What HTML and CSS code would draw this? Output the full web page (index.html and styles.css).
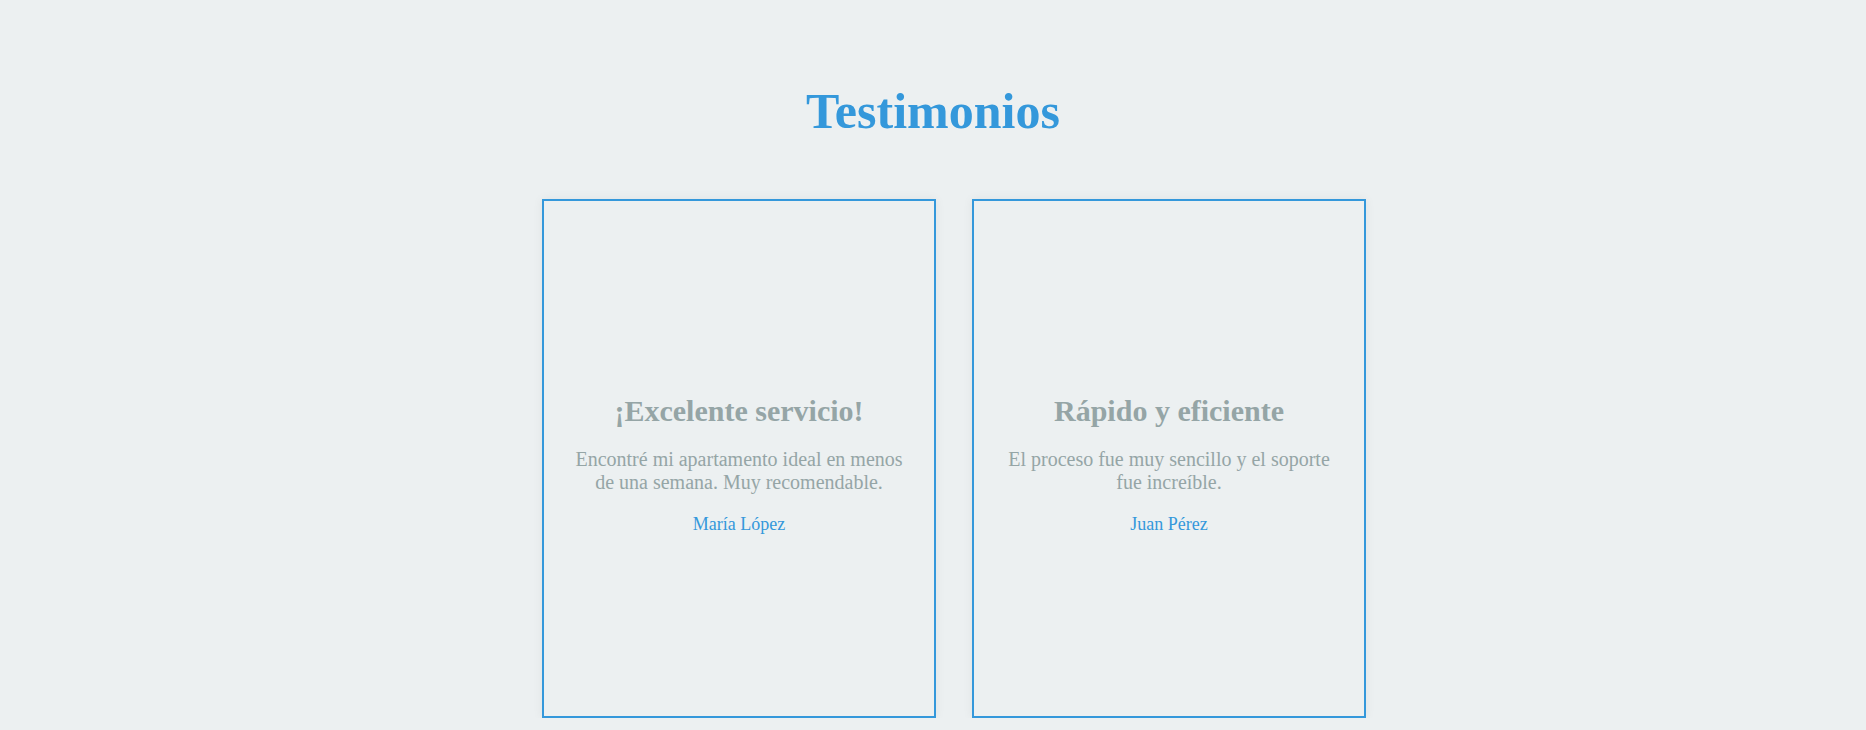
FILE: index.html
```html
<!DOCTYPE html>
<html lang="es">
<head>
<meta charset="utf-8">
<title>Testimonios</title>
<link rel="stylesheet" href="styles.css">
</head>
<body>
<section class="testimonials">
  <h2 class="testimonials-title">Testimonios</h2>
  <div class="testimonials-list">
    <article class="card">
      <h3 class="card-title">¡Excelente servicio!</h3>
      <p class="card-text">Encontré mi apartamento ideal en menos de una semana. Muy recomendable.</p>
      <p class="card-author">María López</p>
    </article>
    <article class="card">
      <h3 class="card-title">Rápido y eficiente</h3>
      <p class="card-text">El proceso fue muy sencillo y el soporte fue increíble.</p>
      <p class="card-author">Juan Pérez</p>
    </article>
  </div>
</section>
</body>
</html>
```

FILE: styles.css
```css
html, body {
  margin: 0;
  padding: 0;
}
body {
  background: #ecf0f1;
  font-family: "Liberation Serif", "Times New Roman", serif;
  color: #95a5a6;
}
.testimonials {
  padding-top: 82px;
}
.testimonials-title {
  margin: 0;
  text-align: center;
  font-size: 50px;
  font-weight: bold;
  color: #3498db;
}
.testimonials-list {
  display: flex;
  justify-content: center;
  gap: 36px;
  margin-top: 59px;
  padding-left: 42px;
}
.card {
  box-sizing: border-box;
  width: 394px;
  height: 519px;
  border: 2px solid #3498db;
  box-shadow: 0 0 10px rgba(0, 0, 0, 0.06);
  display: flex;
  flex-direction: column;
  justify-content: center;
  text-align: center;
  padding: 31px 20px 20px;
}
.card-title {
  margin: 0 0 20px;
  font-size: 30px;
  font-weight: bold;
  color: #95a5a6;
}
.card-text {
  margin: 0 0 20px;
  font-size: 20px;
}
.card-author {
  margin: 0;
  font-size: 18px;
  color: #3498db;
}
```
